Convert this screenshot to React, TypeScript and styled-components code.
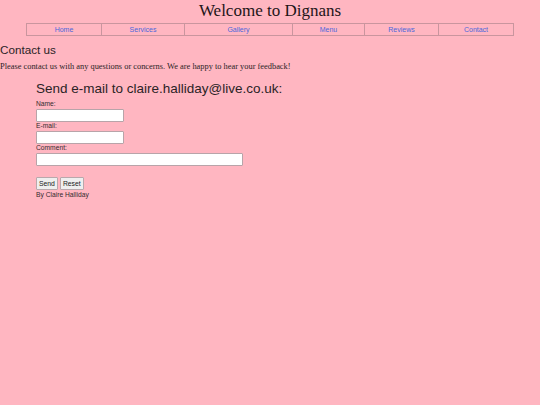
import styled, { createGlobalStyle } from "styled-components";

const Global = createGlobalStyle`
  html, body {
    margin: 0;
    padding: 0;
    background: #ffb6c1;
    color: #2b2326;
  }
`;

const Page = styled.div`
  width: 540px;
  min-height: 405px;
  background: #ffb6c1;
`;

const Title = styled.h1`
  margin: 0;
  padding-top: 1px;
  height: 21px;
  line-height: 19px;
  text-align: center;
  font-family: "Liberation Serif", serif;
  font-weight: normal;
  font-size: 17px;
  color: #1e1518;
`;

const Nav = styled.nav`
  margin: 1px auto 0;
  width: 486px;
  display: grid;
  grid-template-columns: 74fr 83fr 108fr 72fr 74fr 75fr;
  border: 1px solid #c9959e;
`;

const NavCell = styled.a<{ $first?: boolean }>`
  display: block;
  height: 11px;
  line-height: 11px;
  text-align: center;
  font-family: "Liberation Sans", Arial, sans-serif;
  font-size: 7px;
  color: #4b68dc;
  text-decoration: none;
  border-left: ${(p) => (p.$first ? "none" : "1px solid #c9959e")};
`;

const Heading = styled.h2`
  margin: 6px 0 0;
  font-family: "Liberation Sans", Arial, sans-serif;
  font-weight: normal;
  font-size: 11.7px;
  line-height: 15px;
  color: #2b2326;
`;

const Intro = styled.p`
  margin: 4px 0 0;
  font-family: "Liberation Serif", serif;
  font-size: 8.4px;
  line-height: 11px;
  color: #2b2326;
`;

const Form = styled.form`
  margin: 8px 0 0 36px;
  display: flex;
  flex-direction: column;
  align-items: flex-start;
  font-family: "Liberation Sans", Arial, sans-serif;
`;

const FormTitle = styled.h3`
  margin: 0 0 3px;
  font-weight: normal;
  font-size: 13.5px;
  line-height: 17px;
  color: #2b2326;
`;

const Label = styled.label`
  font-size: 6.7px;
  line-height: 8px;
  color: #342b2e;
`;

const Input = styled.input<{ $wide?: boolean }>`
  box-sizing: border-box;
  margin: 1px 0 0;
  width: ${(p) => (p.$wide ? "207px" : "88px")};
  height: 13px;
  padding: 0;
  background: #fff;
  border: 1px solid #b8a4a9;
  border-radius: 1px;
`;

const Buttons = styled.div`
  margin-top: 11px;
  display: flex;
  gap: 2px;
`;

const Button = styled.button`
  height: 13px;
  padding: 0 2px;
  font-family: "Liberation Sans", Arial, sans-serif;
  font-size: 6.8px;
  line-height: 11px;
  color: #222;
  background: #efefef;
  border: 1px solid #b9a8ac;
  border-radius: 1px;
`;

const Byline = styled.div`
  margin-top: 1px;
  font-size: 6.7px;
  line-height: 8px;
  color: #342b2e;
`;

const links = ["Home", "Services", "Gallery", "Menu", "Reviews", "Contact"];

export default function App() {
  return (
    <Page>
      <Global />
      <Title>Welcome to Dignans</Title>
      <Nav>
        {links.map((l, i) => (
          <NavCell key={l} href="#" $first={i === 0}>
            {l}
          </NavCell>
        ))}
      </Nav>
      <Heading>Contact us</Heading>
      <Intro>
        Please contact us with any questions or concerns. We are happy to hear
        your feedback!
      </Intro>
      <Form onSubmit={(e) => e.preventDefault()}>
        <FormTitle>Send e-mail to claire.halliday@live.co.uk:</FormTitle>
        <Label>Name:</Label>
        <Input type="text" />
        <Label>E-mail:</Label>
        <Input type="text" />
        <Label>Comment:</Label>
        <Input type="text" $wide />
        <Buttons>
          <Button type="submit">Send</Button>
          <Button type="reset">Reset</Button>
        </Buttons>
        <Byline>By Claire Halliday</Byline>
      </Form>
    </Page>
  );
}
